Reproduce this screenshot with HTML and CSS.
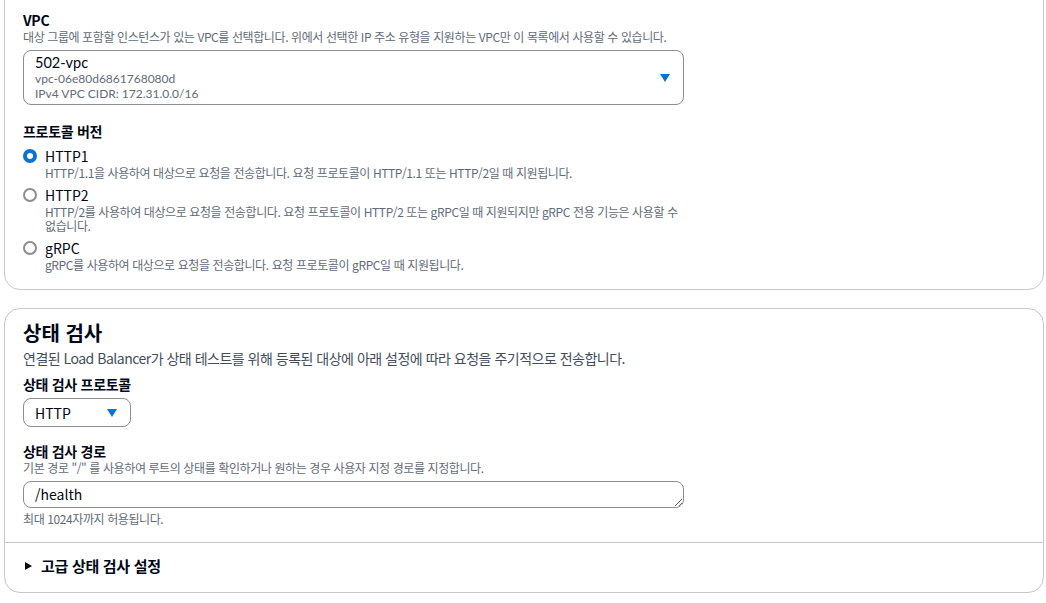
FILE: index.html
```html
<!DOCTYPE html>
<html lang="ko">
<head>
<meta charset="utf-8">
<link rel="stylesheet" href="styles.css">
</head>
<body>
<div class="page">
  <section class="card card-top">
    <div class="field">
      <div class="label">VPC</div>
      <div class="desc">대상 그룹에 포함할 인스턴스가 있는 VPC를 선택합니다. 위에서 선택한 IP 주소 유형을 지원하는 VPC만 이 목록에서 사용할 수 있습니다.</div>
      <div class="select select-vpc">
        <div class="select-body">
          <div class="opt-main">502-vpc</div>
          <div class="opt-sub">vpc-06e80d6861768080d</div>
          <div class="opt-sub">IPv4 VPC CIDR: 172.31.0.0/16</div>
        </div>
        <span class="caret"></span>
      </div>
    </div>
    <div class="field field-radios">
      <div class="label">프로토콜 버전</div>
      <div class="radios">
        <div class="radio-item">
          <span class="radio checked"></span>
          <div class="radio-text">
            <div class="radio-label">HTTP1</div>
            <div class="radio-desc">HTTP/1.1을 사용하여 대상으로 요청을 전송합니다. 요청 프로토콜이 HTTP/1.1 또는 HTTP/2일 때 지원됩니다.</div>
          </div>
        </div>
        <div class="radio-item">
          <span class="radio"></span>
          <div class="radio-text">
            <div class="radio-label">HTTP2</div>
            <div class="radio-desc">HTTP/2를 사용하여 대상으로 요청을 전송합니다. 요청 프로토콜이 HTTP/2 또는 gRPC일 때 지원되지만 gRPC 전용 기능은 사용할 수 없습니다.</div>
          </div>
        </div>
        <div class="radio-item">
          <span class="radio"></span>
          <div class="radio-text">
            <div class="radio-label">gRPC</div>
            <div class="radio-desc">gRPC를 사용하여 대상으로 요청을 전송합니다. 요청 프로토콜이 gRPC일 때 지원됩니다.</div>
          </div>
        </div>
      </div>
    </div>
  </section>

  <section class="card card-health">
    <div class="card-main">
      <h2 class="card-title">상태 검사</h2>
      <div class="card-desc">연결된 Load Balancer가 상태 테스트를 위해 등록된 대상에 아래 설정에 따라 요청을 주기적으로 전송합니다.</div>
      <div class="field field-proto">
        <div class="label">상태 검사 프로토콜</div>
        <div class="select select-small">
          <span class="opt-main">HTTP</span>
          <span class="caret"></span>
        </div>
      </div>
      <div class="field field-path">
        <div class="label">상태 검사 경로</div>
        <div class="desc">기본 경로 "/" 를 사용하여 루트의 상태를 확인하거나 원하는 경우 사용자 지정 경로를 지정합니다.</div>
        <textarea class="input" rows="1">/health</textarea>
        <div class="hint">최대 1024자까지 허용됩니다.</div>
      </div>
    </div>
    <div class="expander">
      <span class="tri"></span>
      <span class="exp-label">고급 상태 검사 설정</span>
    </div>
  </section>
</div>
</body>
</html>
```

FILE: styles.css
```css
* { box-sizing: border-box; }
html, body { margin: 0; padding: 0; background: #ffffff; }
body {
  font-family: "Noto Sans CJK KR", "Noto Sans", sans-serif;
  color: #000716;
  font-size: 14px;
  line-height: 20px;
  overflow: hidden;
}
.page {
  padding: 0 2px 0 4px;
  display: flex;
  flex-direction: column;
  gap: 18px;
}
.card {
  border: 1px solid #c6c6cd;
  border-radius: 16px;
  background: #fff;
}
.card-top {
  margin-top: -30px;
  padding: 40px 18px 17px;
}
.field { max-width: 661px; }
.label {
  font-weight: 700;
  font-size: 14px;
  line-height: 18px;
  letter-spacing: -0.3px;
}
.desc {
  font-size: 12px;
  line-height: 16px;
  color: #5f6b7a;
  letter-spacing: -0.4px;
}
.select {
  border: 1px solid #8c8c94;
  border-radius: 8px;
  display: flex;
  align-items: center;
  justify-content: space-between;
}
.select-vpc {
  margin-top: 5px;
  height: 55px;
  padding: 0 12px 0 11px;
}
.select-vpc .select-body {
  align-self: flex-start;
  padding-top: 3px;
  font-family: Lato, "Noto Sans", sans-serif;
}
.select-vpc .opt-main { font-size: 14.5px; line-height: 17px; }
.opt-main { font-size: 14px; line-height: 18px; }
.opt-sub { font-size: 12px; line-height: 15px; color: #5f6b7a; }
.caret {
  width: 0; height: 0;
  border-left: 5px solid transparent;
  border-right: 5px solid transparent;
  border-top: 8px solid #0972d3;
  margin-right: 1px;
}
.field-radios { margin-top: 17px; }
.radios {
  margin-top: 6px;
  display: flex;
  flex-direction: column;
  gap: 5px;
}
.radio-item { display: flex; gap: 8px; }
.radio {
  flex: none;
  width: 14px; height: 14px;
  border-radius: 50%;
  border: 2px solid #8c8c94;
  margin-top: 3px;
}
.radio.checked { border: 4px solid #0972d3; }
.radio-label { font-size: 14px; line-height: 20px; }
.radio-desc {
  font-size: 12px;
  line-height: 14px;
  color: #5f6b7a;
  letter-spacing: -0.4px;
}

.card-health { padding: 0; }
.card-main { padding: 12px 18px 15px; }
.card-title {
  margin: 0;
  font-size: 20px;
  line-height: 24px;
  font-weight: 700;
}
.card-desc {
  margin-top: 3px;
  font-size: 14px;
  line-height: 20px;
  color: #414d5c;
  letter-spacing: -0.5px;
}
.field-proto { margin-top: 7px; }
.select-small {
  margin-top: 5px;
  width: 108px;
  height: 29px;
  padding: 0 12px 0 11px;
}
.field-path { margin-top: 15px; }
.input {
  display: block;
  margin-top: 5px;
  width: 100%;
  height: 27px;
  border: 1px solid #8c8c94;
  border-radius: 8px;
  padding: 2px 11px;
  font-family: inherit;
  font-size: 14px;
  line-height: 20px;
  color: #000716;
  resize: vertical;
  overflow: hidden;
}
.hint {
  margin-top: 3px;
  font-size: 12px;
  line-height: 16px;
  color: #5f6b7a;
  letter-spacing: -0.4px;
}
.expander {
  border-top: 1px solid #c6c6cd;
  padding: 13px 20px 16px;
  display: flex;
  align-items: center;
  gap: 9px;
}
.tri {
  width: 0; height: 0;
  border-top: 4.5px solid transparent;
  border-bottom: 4.5px solid transparent;
  border-left: 7px solid #000716;
}
.exp-label { font-weight: 700; font-size: 15px; line-height: 20px; letter-spacing: -0.3px; }
```
